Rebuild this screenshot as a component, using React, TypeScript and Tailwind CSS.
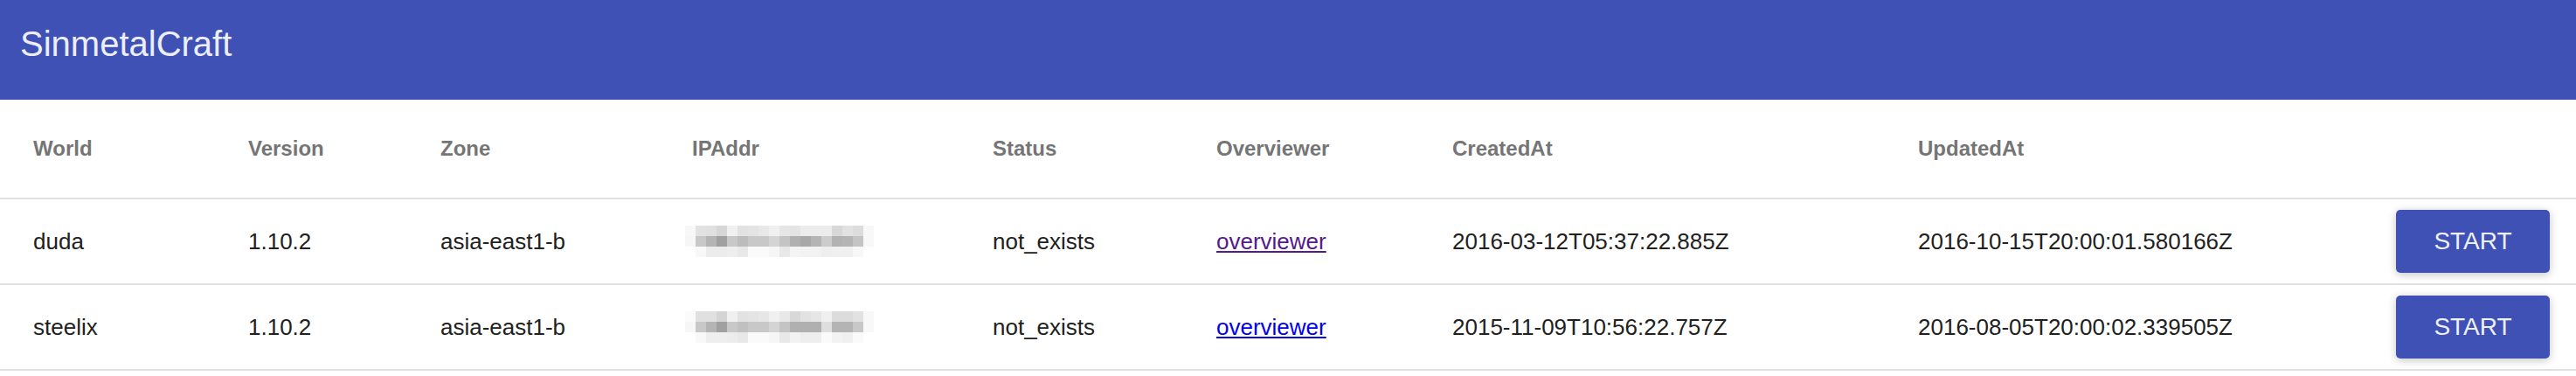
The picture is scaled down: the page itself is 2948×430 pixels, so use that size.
import React from "react";

type World = {
  name: string;
  version: string;
  zone: string;
  status: string;
  visited: boolean;
  createdAt: string;
  updatedAt: string;
  mosaic: string[][];
};

// pixelated IP address, one hex per 12px block
const MOSAIC_A = [
  ["#f8f8f8", "#e2e2e2", "#e0e0e0", "#d6d6d6", "#f0f0f0", "#e2e2e2", "#e4e4e4", "#e8e8e8", "#f0f0f0", "#e6e6e6", "#e4e4e4", "#ececec", "#ececec", "#ececec", "#d8d8d8", "#e2e2e2", "#dcdcdc", "#f8f8f8"],
  ["#f6f6f6", "#c8c8c8", "#b4b4b4", "#a0a0a0", "#c8c8c8", "#bcbcbc", "#c8c8c8", "#c8c8c8", "#d4d4d4", "#c4c4c4", "#b0b0b0", "#a8a8a8", "#b4b4b4", "#cccccc", "#b2b2b2", "#b4b4b4", "#c4c4c4", "#f8f8f8"],
  ["#ffffff", "#f8f8f8", "#ececec", "#ececec", "#eeeeee", "#e8e8e8", "#fafafa", "#fafafa", "#f6f6f6", "#e8e8e8", "#f4f4f4", "#f2f2f2", "#f2f2f2", "#eeeeee", "#f0f0f0", "#f0f0f0", "#f8f8f8", "#ffffff"],
];

const MOSAIC_B = [
  ["#fbfbfb", "#e0e0e0", "#e0e0e0", "#d4d4d4", "#f0f0f0", "#e2e2e2", "#e4e4e4", "#e6e6e6", "#f0f0f0", "#e8e8e8", "#d8d8d8", "#e2e2e2", "#e6e6e6", "#f0f0f0", "#dcdcdc", "#dcdcdc", "#e2e2e2", "#f8f8f8"],
  ["#f6f6f6", "#c8c8c8", "#b4b4b4", "#a0a0a0", "#c8c8c8", "#c0c0c0", "#c8c8c8", "#c8c8c8", "#d4d4d4", "#c4c4c4", "#b0b0b0", "#b0b0b0", "#b0b0b0", "#dedede", "#b4b4b4", "#b4b4b4", "#c8c8c8", "#f8f8f8"],
  ["#ffffff", "#f8f8f8", "#eeeeee", "#eeeeee", "#ececec", "#e8e8e8", "#fafafa", "#fafafa", "#f6f6f6", "#e8e8e8", "#f2f2f2", "#eeeeee", "#eeeeee", "#fafafa", "#f2f2f2", "#f0f0f0", "#fafafa", "#ffffff"],
];

const WORLDS: World[] = [
  {
    name: "duda",
    version: "1.10.2",
    zone: "asia-east1-b",
    status: "not_exists",
    visited: true,
    createdAt: "2016-03-12T05:37:22.885Z",
    updatedAt: "2016-10-15T20:00:01.580166Z",
    mosaic: MOSAIC_A,
  },
  {
    name: "steelix",
    version: "1.10.2",
    zone: "asia-east1-b",
    status: "not_exists",
    visited: false,
    createdAt: "2015-11-09T10:56:22.757Z",
    updatedAt: "2016-08-05T20:00:02.339505Z",
    mosaic: MOSAIC_B,
  },
];

const HEADERS = ["World", "Version", "Zone", "IPAddr", "Status", "Overviewer", "CreatedAt", "UpdatedAt"];

const GRID =
  "grid grid-cols-[246px_220px_288px_344px_256px_270px_533px_1fr_176px] items-center pl-[38px] pr-[30px] border-b-2 border-[#e0e0e0]";

function Mosaic({ rows }: { rows: string[][] }) {
  return (
    <div className="-ml-2 flex flex-col">
      {rows.map((row, i) => (
        <div key={i} className="flex">
          {row.map((c, j) => (
            <span key={j} className="h-[12px] w-[12px]" style={{ backgroundColor: c }} />
          ))}
        </div>
      ))}
    </div>
  );
}

export default function App() {
  return (
    <div className="min-h-[430px] w-full bg-white font-['Liberation_Sans',Arial,sans-serif]">
      <header className="h-[114px] bg-[#3f51b5] pl-[23px] pt-[30px]">
        <h1 className="text-[40px] leading-none font-normal text-[#eceef9]">SinmetalCraft</h1>
      </header>

      <div className="w-full">
        <div className={`${GRID} h-[114px] text-[24px] font-bold text-[#757575]`}>
          {HEADERS.map((h) => (
            <div key={h}>{h}</div>
          ))}
          <div />
        </div>

        {WORLDS.map((w) => (
          <div key={w.name} className={`${GRID} h-[98px] text-[26px] text-[#212121]`}>
            <div>{w.name}</div>
            <div>{w.version}</div>
            <div>{w.zone}</div>
            <div>
              <Mosaic rows={w.mosaic} />
            </div>
            <div>{w.status}</div>
            <div>
              <a
                href="#"
                className={`underline ${w.visited ? "text-[#551a8b]" : "text-[#0000ee]"}`}
              >
                overviewer
              </a>
            </div>
            <div>{w.createdAt}</div>
            <div>{w.updatedAt}</div>
            <button
              type="button"
              className="flex h-[72px] w-[176px] items-center justify-center rounded-[5px] bg-[#3f51b5] text-[28px] text-[#eef0fa] shadow-[0_2px_12px_rgba(0,0,0,0.12),0_2px_8px_rgba(0,0,0,0.12)]"
            >
              START
            </button>
          </div>
        ))}
      </div>
    </div>
  );
}
